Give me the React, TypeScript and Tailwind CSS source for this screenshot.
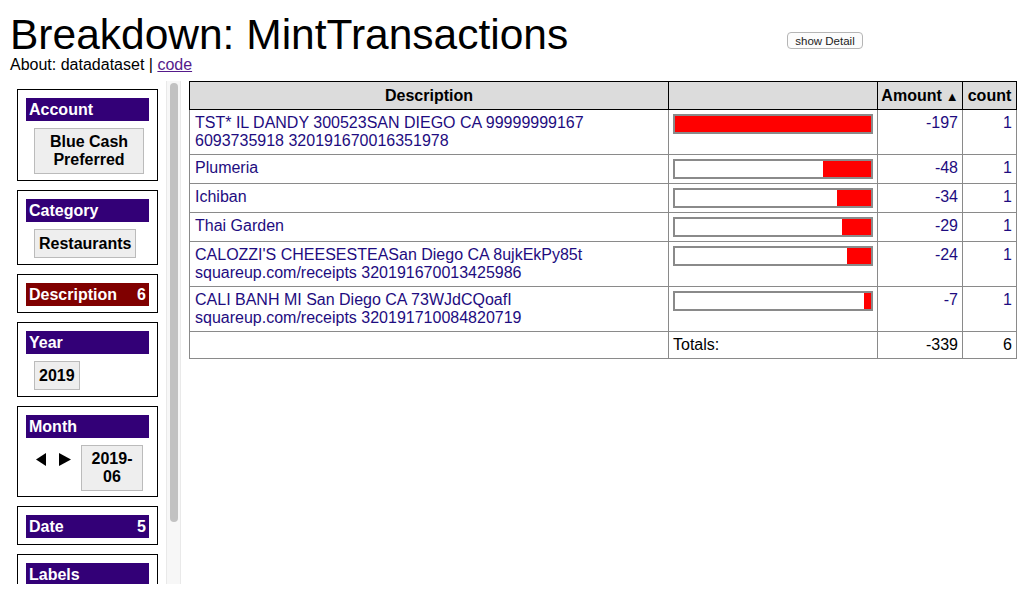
import React from "react";

const rows = [
  {
    desc: ["TST* IL DANDY 300523SAN DIEGO CA 99999999167", "6093735918 320191670016351978"],
    amount: -197,
    count: 1,
  },
  { desc: ["Plumeria"], amount: -48, count: 1 },
  { desc: ["Ichiban"], amount: -34, count: 1 },
  { desc: ["Thai Garden"], amount: -29, count: 1 },
  {
    desc: ["CALOZZI'S CHEESESTEASan Diego CA 8ujkEkPy85t", "squareup.com/receipts 320191670013425986"],
    amount: -24,
    count: 1,
  },
  {
    desc: ["CALI BANH MI San Diego CA 73WJdCQoafI", "squareup.com/receipts 320191710084820719"],
    amount: -7,
    count: 1,
  },
];

function Header({ title, count, red }: { title: string; count?: number; red?: boolean }) {
  return (
    <div
      className={`flex justify-between items-center h-[23px] px-[3px] text-white font-bold text-[16px] leading-[18px] ${
        red ? "bg-[#800000]" : "bg-[#330077]"
      }`}
    >
      <span>{title}</span>
      {count !== undefined && <span>{count}</span>}
    </div>
  );
}

function Pill({ children, className = "" }: { children: React.ReactNode; className?: string }) {
  return (
    <div
      className={`inline-block bg-[#eeeeee] border border-[#bbbbbb] px-[4px] py-[4px] font-bold text-[16px] leading-[18px] text-center text-black ${className}`}
    >
      {children}
    </div>
  );
}

function Box({ children, className = "" }: { children: React.ReactNode; className?: string }) {
  return <div className={`border border-black pt-[8px] px-[8px] mb-[9px] w-[141px] ${className}`}>{children}</div>;
}

function Sidebar() {
  return (
    <div className="flex h-[503px] shrink-0">
      <div className="w-[166px] h-full overflow-hidden pl-[17px] pt-[8px]">
        <Box className="pb-[6px]">
          <Header title="Account" />
          <div className="mt-[7px] pl-[8px]">
            <Pill className="w-[110px]">
              Blue Cash
              <br />
              Preferred
            </Pill>
          </div>
        </Box>
        <Box className="pb-[6px]">
          <Header title="Category" />
          <div className="mt-[7px] pl-[8px]">
            <Pill className="leading-[19px]">Restaurants</Pill>
          </div>
        </Box>
        <Box className="pb-[6px]">
          <Header title="Description" count={6} red />
        </Box>
        <Box className="pb-[6px]">
          <Header title="Year" />
          <div className="mt-[7px] pl-[8px]">
            <Pill className="leading-[19px]">2019</Pill>
          </div>
        </Box>
        <Box className="pb-[5px]">
          <Header title="Month" />
          <div className="mt-[7px] flex items-start">
            <div className="flex items-center gap-[13px] pl-[10px] pt-[8px] w-[55px]">
              <svg width="10" height="13" viewBox="0 0 10 13">
                <path d="M10 0 L0 6.5 L10 13 Z" fill="black" />
              </svg>
              <svg width="12" height="13" viewBox="0 0 12 13">
                <path d="M0 0 L12 6.5 L0 13 Z" fill="black" />
              </svg>
            </div>
            <Pill className="w-[62px]">
              2019-
              <br />
              06
            </Pill>
          </div>
        </Box>
        <Box className="pb-[6px]">
          <Header title="Date" count={5} />
        </Box>
        <Box className="pb-[6px]">
          <Header title="Labels" />
          <div className="h-[40px]" />
        </Box>
      </div>
      <div className="w-[15px] h-full bg-[#f7f7f7] border-x border-[#e9e9e9] pt-[2px] flex justify-center">
        <div className="w-[8px] h-[439px] rounded-full bg-[#c2c2c2]" />
      </div>
    </div>
  );
}

function Bar({ amount }: { amount: number }) {
  const w = Math.round((Math.abs(amount) / 197) * 196);
  return (
    <div className="w-[200px] h-[20px] border-2 border-[#8a8a8a] bg-white flex justify-end">
      <div className="h-full bg-[#ff0000]" style={{ width: w }} />
    </div>
  );
}

export default function App() {
  const th = "border border-black bg-[#dcdcdc] font-bold px-[3px] pt-[5px] pb-[3px] h-[28px] align-top";
  const td = "border border-[#8a8a8a] px-[4px] py-[4px] align-top";
  return (
    <div
      className="bg-white w-[1025px] h-[601px] overflow-hidden text-black"
      style={{ fontFamily: "'Liberation Sans', Arial, sans-serif" }}
    >
      <div className="flex pl-[10px] pt-[13px]">
        <div className="w-[777px] shrink-0">
          <h1 className="text-[42.5px] leading-[43px] font-normal">Breakdown: MintTransactions</h1>
          <div className="text-[16px] leading-[18px]">
            About: datadataset |{" "}
            <a className="text-[#551a8b] underline" href="#">
              code
            </a>
          </div>
        </div>
        <div className="pt-[19px]">
          <button className="block w-[76px] h-[17px] bg-[#fcfcfc] border border-[#b5b5b5] rounded-[4px] text-[11.5px] leading-[14px] text-[#222]">
            show Detail
          </button>
        </div>
      </div>
      <div className="flex mt-[7px] gap-[8px]">
        <Sidebar />
        <table className="table-fixed w-[827px] border-collapse text-[16px] leading-[18px] h-fit">
          <colgroup>
            <col className="w-[479px]" />
            <col className="w-[209px]" />
            <col className="w-[85px]" />
            <col className="w-[54px]" />
          </colgroup>
          <thead>
            <tr>
              <th className={th}>Description</th>
              <th className={th}></th>
              <th className={`${th} whitespace-nowrap`}>
                Amount<span className="text-[13px] leading-[18px] ml-[4px]">▲</span>
              </th>
              <th className={th}>count</th>
            </tr>
          </thead>
          <tbody className="text-[#1e0c80]">
            {rows.map((r, i) => (
              <tr key={i}>
                <td className={`${td} pl-[5px]`}>
                  {r.desc.map((l, j) => (
                    <div key={j}>{l}</div>
                  ))}
                </td>
                <td className={td}>
                  <Bar amount={r.amount} />
                </td>
                <td className={`${td} text-right`}>{r.amount}</td>
                <td className={`${td} text-right`}>{r.count}</td>
              </tr>
            ))}
            <tr className="text-black">
              <td className={td}></td>
              <td className={td}>Totals:</td>
              <td className={`${td} text-right`}>-339</td>
              <td className={`${td} text-right`}>6</td>
            </tr>
          </tbody>
        </table>
      </div>
    </div>
  );
}
